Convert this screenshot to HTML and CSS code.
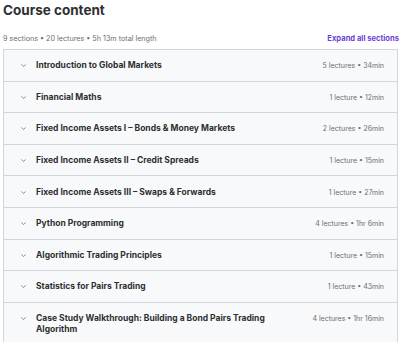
FILE: index.html
```html
<!DOCTYPE html>
<html lang="en">
  <head>
    <meta charset="UTF-8" />
    <meta name="viewport" content="width=device-width, initial-scale=1.0" />
    <title>Course content</title>
    <link rel="stylesheet" href="styles.css">
  </head>
  <body>
    <div class="course">
      <h2 class="course-title">Course content</h2>
      <div class="course-meta">
        <span>9 sections • 20 lectures • 5h 13m total length</span>
        <button class="expand">Expand all sections</button>
      </div>
      <div class="sections">
        <div class="section">
          <span class="chev"><svg viewBox="0 0 10 10" width="7" height="7"><path d="M2 3.5 L5 6.5 L8 3.5" fill="none" stroke="#6a6f73" stroke-width="1.1"/></svg></span>
          <span class="name">Introduction to Global Markets</span>
          <span class="info">5 lectures • 34min</span>
        </div>
        <div class="section">
          <span class="chev"><svg viewBox="0 0 10 10" width="7" height="7"><path d="M2 3.5 L5 6.5 L8 3.5" fill="none" stroke="#6a6f73" stroke-width="1.1"/></svg></span>
          <span class="name">Financial Maths</span>
          <span class="info">1 lecture • 12min</span>
        </div>
        <div class="section">
          <span class="chev"><svg viewBox="0 0 10 10" width="7" height="7"><path d="M2 3.5 L5 6.5 L8 3.5" fill="none" stroke="#6a6f73" stroke-width="1.1"/></svg></span>
          <span class="name">Fixed Income Assets I – Bonds &amp; Money Markets</span>
          <span class="info">2 lectures • 26min</span>
        </div>
        <div class="section">
          <span class="chev"><svg viewBox="0 0 10 10" width="7" height="7"><path d="M2 3.5 L5 6.5 L8 3.5" fill="none" stroke="#6a6f73" stroke-width="1.1"/></svg></span>
          <span class="name">Fixed Income Assets II – Credit Spreads</span>
          <span class="info">1 lecture • 15min</span>
        </div>
        <div class="section">
          <span class="chev"><svg viewBox="0 0 10 10" width="7" height="7"><path d="M2 3.5 L5 6.5 L8 3.5" fill="none" stroke="#6a6f73" stroke-width="1.1"/></svg></span>
          <span class="name">Fixed Income Assets III – Swaps &amp; Forwards</span>
          <span class="info">1 lecture • 27min</span>
        </div>
        <div class="section">
          <span class="chev"><svg viewBox="0 0 10 10" width="7" height="7"><path d="M2 3.5 L5 6.5 L8 3.5" fill="none" stroke="#6a6f73" stroke-width="1.1"/></svg></span>
          <span class="name">Python Programming</span>
          <span class="info">4 lectures • 1hr 6min</span>
        </div>
        <div class="section">
          <span class="chev"><svg viewBox="0 0 10 10" width="7" height="7"><path d="M2 3.5 L5 6.5 L8 3.5" fill="none" stroke="#6a6f73" stroke-width="1.1"/></svg></span>
          <span class="name">Algorithmic Trading Principles</span>
          <span class="info">1 lecture • 15min</span>
        </div>
        <div class="section">
          <span class="chev"><svg viewBox="0 0 10 10" width="7" height="7"><path d="M2 3.5 L5 6.5 L8 3.5" fill="none" stroke="#6a6f73" stroke-width="1.1"/></svg></span>
          <span class="name">Statistics for Pairs Trading</span>
          <span class="info">1 lecture • 43min</span>
        </div>
        <div class="section">
          <span class="chev"><svg viewBox="0 0 10 10" width="7" height="7"><path d="M2 3.5 L5 6.5 L8 3.5" fill="none" stroke="#6a6f73" stroke-width="1.1"/></svg></span>
          <span class="name">Case Study Walkthrough: Building a Bond Pairs Trading Algorithm</span>
          <span class="info">4 lectures • 1hr 16min</span>
        </div>
      </div>
    </div>
  </body>
</html>
```

FILE: styles.css
```css
* {
  box-sizing: border-box;
  margin: 0;
  padding: 0;
}
body {
  background: #ffffff;
  font-family: Inter, "Noto Sans", sans-serif;
  color: #2d2f31;
}

.course {
  padding: 0 1px 0 3px;
}
.course-title {
  font-size: 13.5px;
  font-weight: 700;
  line-height: 20px;
  color: #2d2f31;
}
.course-meta {
  display: flex;
  justify-content: space-between;
  align-items: center;
  margin-top: 12px;
  height: 12px;
  font-size: 7.2px;
  color: #6a6f73;
}
.expand {
  border: none;
  background: none;
  font-family: inherit;
  font-size: 7.6px;
  font-weight: 700;
  color: #6b3fd4;
  cursor: pointer;
}
.sections {
  margin-top: 5px;
  border: 1px solid #d1d7dc;
  border-bottom: none;
  margin-right: 1px;
}
.section {
  display: flex;
  align-items: flex-start;
  padding: 10.3px 13px 9.3px 16px;
  background: #f7f9fa;
  border-bottom: 1px solid #d1d7dc;
  line-height: 11px;
}
.chev {
  display: flex;
  align-items: center;
  height: 11px;
  width: 16px;
  flex-shrink: 0;
}
.name {
  flex: 1;
  font-size: 8.5px;
  font-weight: 700;
  color: #2d2f31;
  padding-right: 30px;
}
.info {
  font-size: 7px;
  color: #6a6f73;
  white-space: nowrap;
}
```
